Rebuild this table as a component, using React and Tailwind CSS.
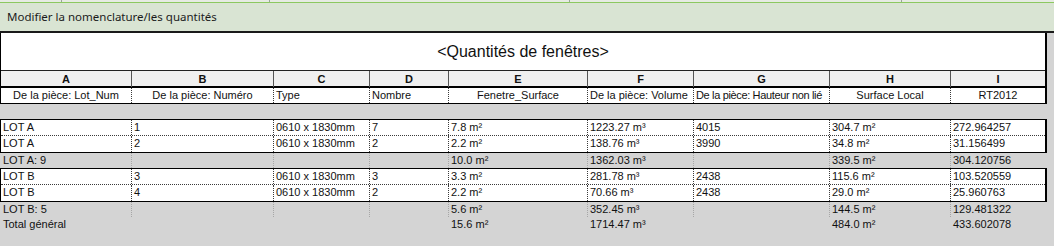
import React from 'react';

const cols = 'grid grid-cols-[130px_142px_96px_79px_139px_106px_136px_121px_95px]';

const letters = ['A', 'B', 'C', 'D', 'E', 'F', 'G', 'H', 'I'];

const fields = [
  { label: 'De la pièce: Lot_Num', center: true },
  { label: 'De la pièce: Numéro', center: true },
  { label: 'Type' },
  { label: 'Nombre' },
  { label: 'Fenetre_Surface', center: true },
  { label: 'De la pièce: Volume' },
  { label: 'De la pièce: Hauteur non lié', tight: true },
  { label: 'Surface Local', center: true },
  { label: 'RT2012', center: true },
];

const groups = [
  {
    rows: [
      ['LOT A', '1', '0610 x 1830mm', '7', '7.8 m²', '1223.27 m³', '4015', '304.7 m²', '272.964257'],
      ['LOT A', '2', '0610 x 1830mm', '2', '2.2 m²', '138.76 m³', '3990', '34.8 m²', '31.156499'],
    ],
    total: ['LOT A: 9', '', '', '', '10.0 m²', '1362.03 m³', '', '339.5 m²', '304.120756'],
  },
  {
    rows: [
      ['LOT B', '3', '0610 x 1830mm', '3', '3.3 m²', '281.78 m³', '2438', '115.6 m²', '103.520559'],
      ['LOT B', '4', '0610 x 1830mm', '2', '2.2 m²', '70.66 m³', '2438', '29.0 m²', '25.960763'],
    ],
    total: ['LOT B: 5', '', '', '', '5.6 m²', '352.45 m³', '', '144.5 m²', '129.481322'],
  },
];

const grandTotal = ['Total général', '', '', '', '15.6 m²', '1714.47 m³', '', '484.0 m²', '433.602078'];

function DataRow({ cells, last }) {
  return (
    <div className={`${cols} h-[16px] ${last ? '' : 'border-b border-dotted border-[#3a3a3a]'}`}>
      {cells.map((c, i) => (
        <div
          key={i}
          className={`pl-[2px] leading-[15px] whitespace-nowrap overflow-hidden ${i > 0 ? 'border-l border-dotted border-[#3a3a3a]' : ''}`}
        >
          {c}
        </div>
      ))}
    </div>
  );
}

function TotalRow({ cells, lines }) {
  return (
    <div className={`${cols} h-[15px] border-l border-transparent`}>
      {cells.map((c, i) => (
        <div
          key={i}
          className={`pl-[2px] leading-[15px] whitespace-nowrap ${i > 0 && lines ? 'border-l border-dotted border-[#a6a6a6]' : i > 0 ? 'border-l border-transparent' : ''}`}
        >
          {c}
        </div>
      ))}
    </div>
  );
}

export default function App() {
  return (
    <div className="w-[1054px] h-[246px] bg-[#d4d4d4] overflow-hidden font-['Liberation_Sans',Arial,sans-serif] text-[11px] text-[#111]">
      {/* ribbon title strip */}
      <div className="h-[2px] bg-[#e6ebe3] flex">
        <div className="w-[62px] border-r border-[#9aa49a]" />
        <div className="w-[208px] border-r border-[#9aa49a]" />
        <div className="w-[300px] border-r border-[#9aa49a]" />
        <div className="w-[332px] border-r border-[#9aa49a]" />
      </div>
      <div className="h-[1px] bg-[#8cc860]" />
      <div className="h-[28px] bg-[#d9e4d3] pl-[7px] flex items-center font-['Noto_Sans',sans-serif] text-[11.5px] text-[#1b1b1b]">
        Modifier la nomenclature/les quantités
      </div>
      <div className="h-[2px] bg-[#1a1a1a]" />

      {/* schedule header */}
      <div className="w-[1047px] bg-white border-l border-r-2 border-black">
        <div className="h-[37px] flex items-center justify-center text-[16px] text-[#111]">
          &lt;Quantités de fenêtres&gt;
        </div>
        <div className={`${cols} h-[18px] bg-[#f0f0f0] border-t border-[#222] border-b-2 border-b-black`}>
          {letters.map((l, i) => (
            <div
              key={l}
              className={`text-center font-bold leading-[16px] ${i > 0 ? 'border-l border-[#555]' : ''}`}
            >
              {l}
            </div>
          ))}
        </div>
        <div className={`${cols} h-[16px] border-b border-black`}>
          {fields.map((f, i) => (
            <div
              key={i}
              className={`leading-[15px] whitespace-nowrap ${f.center ? 'text-center' : 'pl-[2px]'} ${f.tight ? 'tracking-[-0.35px]' : ''} ${i > 0 ? 'border-l border-dotted border-[#3a3a3a]' : ''}`}
            >
              {f.label}
            </div>
          ))}
        </div>
      </div>

      {/* blank row */}
      <div className="h-[15px]" />

      {groups.map((g, gi) => (
        <div key={gi}>
          <div className="w-[1047px] bg-white border-y border-l border-r-2 border-black">
            {g.rows.map((r, ri) => (
              <DataRow key={ri} cells={r} last={ri === g.rows.length - 1} />
            ))}
          </div>
          <TotalRow cells={g.total} lines />
        </div>
      ))}
      <TotalRow cells={grandTotal} />
    </div>
  );
}
